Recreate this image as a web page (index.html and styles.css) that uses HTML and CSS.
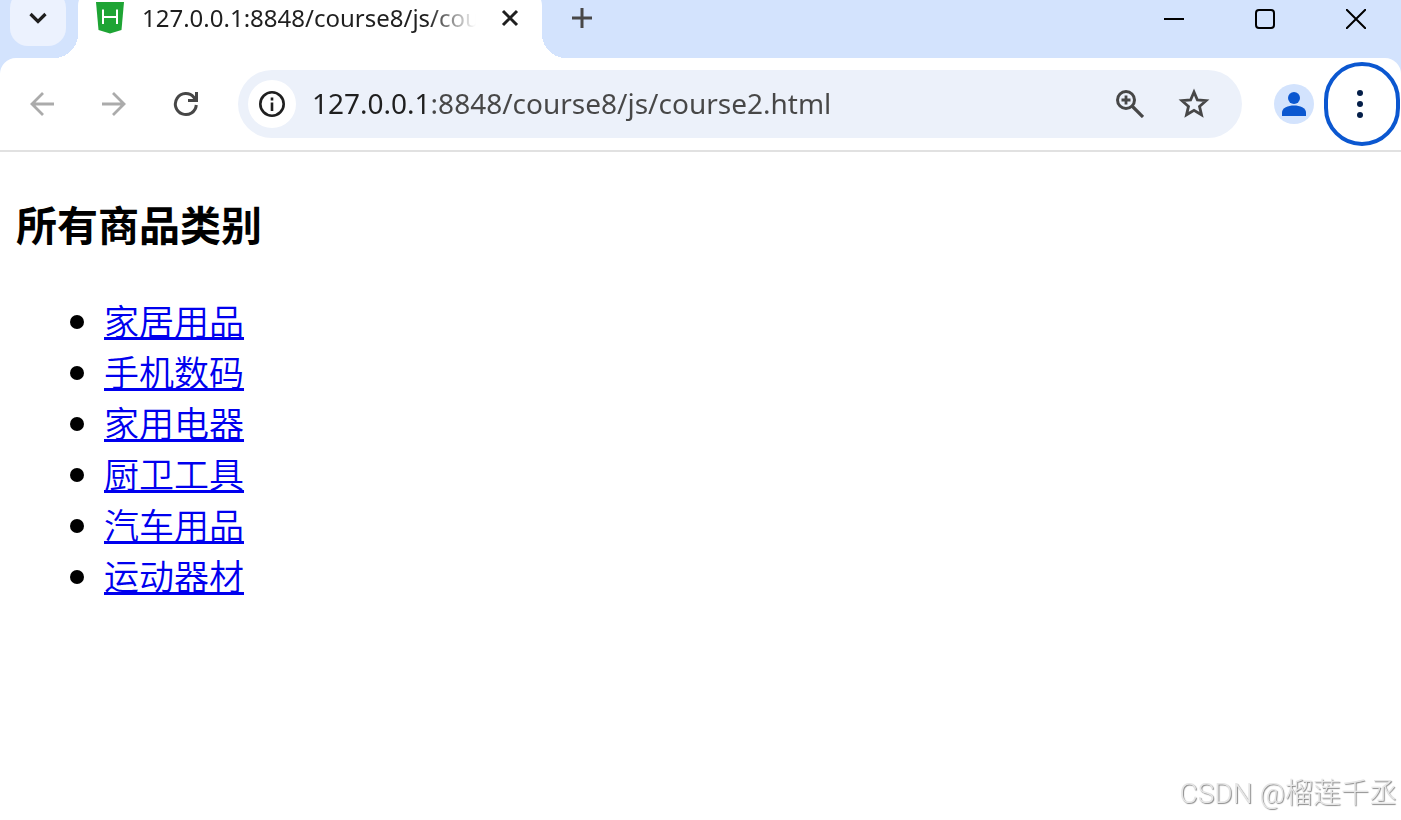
FILE: index.html
```html
<!DOCTYPE html>
<html lang="zh-CN">

<head>
	<meta charset="utf-8">
	<title>course2</title>
	<link rel="stylesheet" href="styles.css">
</head>

<body>
	<header class="browser">
		<div class="tabstrip">
			<button type="button" class="tabsearch" aria-label="搜索标签页">
				<svg width="20" height="12" viewBox="0 0 20 12"><path d="M2.500 2l7.500 7.500L17.500 2" fill="none" stroke="#1f1f1f" stroke-width="3.200" /></svg>
			</button>
			<div class="tab">
				<svg class="favicon" width="28" height="32" viewBox="0 0 28 32">
					<path d="M0 0h28l-2.500 28L14 31.500 2.500 28z" fill="#1ea434" />
					<path d="M7 7.500v14.500M21 7.500v14.500M7 15h14" fill="none" stroke="#fff" stroke-width="2" />
				</svg>
				<span class="tabtitle">127.0.0.1:8848/course8/js/course2.html</span>
				<button type="button" class="tabclose" aria-label="关闭">
					<svg width="18" height="18" viewBox="0 0 18 18"><path d="M2 2l14 14M16 2L2 16" stroke="#1f1f1f" stroke-width="3" /></svg>
				</button>
			</div>
			<button type="button" class="newtab" aria-label="新标签页">
				<svg width="20" height="20" viewBox="0 0 20 20"><path d="M10 0v20M0 10h20" stroke="#474747" stroke-width="3" /></svg>
			</button>
			<div class="windowbuttons">
				<button type="button" aria-label="最小化">
					<svg width="20" height="20" viewBox="0 0 20 20"><path d="M0 10h20" stroke="#000" stroke-width="2" /></svg>
				</button>
				<button type="button" aria-label="最大化">
					<svg width="20" height="20" viewBox="0 0 20 20"><rect x="1" y="1" width="18" height="18" rx="3" fill="none" stroke="#000" stroke-width="2" /></svg>
				</button>
				<button type="button" aria-label="关闭窗口">
					<svg width="20" height="20" viewBox="0 0 20 20"><path d="M0 0l20 20M20 0L0 20" stroke="#000" stroke-width="2" /></svg>
				</button>
			</div>
		</div>

		<div class="toolbar">
			<button type="button" class="nav" aria-label="后退">
				<svg width="24" height="24" viewBox="0 0 24 24"><path d="M24 12H2M13 1L2 12l11 11" fill="none" stroke="#ababab" stroke-width="2.800" /></svg>
			</button>
			<button type="button" class="nav" aria-label="前进">
				<svg width="24" height="24" viewBox="0 0 24 24"><path d="M0 12h22M11 1l11 11-11 11" fill="none" stroke="#ababab" stroke-width="2.800" /></svg>
			</button>
			<button type="button" class="nav" aria-label="重新加载">
				<svg width="26" height="26" viewBox="0 0 26 26"><path d="M23.300 14A10.500 10.500 0 1 1 20.800 6.200L23 9M23.500 1v8.500H15" fill="none" stroke="#474747" stroke-width="3" /></svg>
			</button>
			<div class="omnibox">
				<button type="button" class="siteinfo" aria-label="查看网站信息">
					<svg width="26" height="26" viewBox="0 0 26 26">
						<circle cx="13" cy="13" r="11.700" fill="none" stroke="#1f1f1f" stroke-width="2.600" />
						<path d="M13 11.500V20M13 6.500v3" stroke="#1f1f1f" stroke-width="2.600" />
					</svg>
				</button>
				<input type="text" class="url" aria-label="地址栏" value="127.0.0.1:8848/course8/js/course2.html">
				<button type="button" class="omniicon" aria-label="缩放">
					<svg width="28" height="28" viewBox="0 0 28 28">
						<circle cx="10" cy="10" r="8.500" fill="none" stroke="#474747" stroke-width="3" />
						<path d="M16 16l11 11" stroke="#474747" stroke-width="3.200" />
						<path d="M10 5.500v9M5.500 10h9" stroke="#474747" stroke-width="2.800" />
					</svg>
				</button>
				<button type="button" class="omniicon" aria-label="为此标签页添加书签">
					<svg width="32" height="32" viewBox="0 0 32 32"><path d="M16 4l3.400 8 8.600.700-6.500 5.700 2 8.400L16 22.300l-7.500 4.500 2-8.400L4 12.700l8.600-.700z" fill="none" stroke="#474747" stroke-width="2.800" /></svg>
				</button>
			</div>
			<button type="button" class="avatar" aria-label="个人资料">
				<svg width="24" height="24" viewBox="0 0 24 24">
					<circle cx="12" cy="6" r="6" fill="#0b57d0" />
					<path d="M0 24v-3.500C0 16 6 13.500 12 13.500s12 2.500 12 7V24z" fill="#0b57d0" />
				</svg>
			</button>
			<button type="button" class="menu" aria-label="菜单">
				<svg width="6" height="28" viewBox="0 0 6 28">
					<g fill="#041e49"><circle cx="3" cy="3" r="3" /><circle cx="3" cy="14" r="3" /><circle cx="3" cy="25" r="3" /></g>
				</svg>
			</button>
		</div>
	</header>

	<main class="content">
		<h3>所有商品类别</h3>
		<ul>
			<li><a href="#">家居用品</a></li>
			<li><a href="#">手机数码</a></li>
			<li><a href="#">家用电器</a></li>
			<li><a href="#">厨卫工具</a></li>
			<li><a href="#">汽车用品</a></li>
			<li><a href="#">运动器材</a></li>
		</ul>
	</main>

	<div class="watermark">CSDN @榴莲千丞</div>
</body>

</html>
```

FILE: styles.css
```css
* {
	box-sizing: border-box;
}

body {
	margin: 0;
	min-height: 100vh;
	background-color: #ffffff;
	font-family: "Noto Sans", "Noto Sans CJK SC", sans-serif;
}

button {
	display: flex;
	flex: none;
	align-items: center;
	justify-content: center;
	margin: 0;
	padding: 0;
	border: 0;
	background: none;
}

svg {
	display: block;
	flex: none;
}

.browser {
	background-color: #d3e3fd;
}

.tabstrip {
	display: flex;
	height: 58px;
	overflow: hidden;
}

/* the top of the strip runs off the window */
.tabsearch {
	width: 56px;
	height: 56px;
	margin: -10px 12px 0 10px;
	border-radius: 18px;
	background-color: #ecf2fe;
}

.tab {
	position: relative;
	display: flex;
	align-items: center;
	width: 464px;
	height: 72px;
	margin-top: -14px;
	padding: 0 18px 8px;
	border-radius: 20px 20px 0 0;
	background-color: #ffffff;
}

.tab::before,
.tab::after {
	content: "";
	position: absolute;
	bottom: 0;
	width: 24px;
	height: 24px;
}

.tab::before {
	right: 100%;
	background: radial-gradient(circle at 0 0, transparent 24px, #ffffff 24px);
}

.tab::after {
	left: 100%;
	background: radial-gradient(circle at 100% 0, transparent 24px, #ffffff 24px);
}

.tabtitle {
	flex: 1;
	min-width: 0;
	margin: 0 20px 0 18px;
	overflow: hidden;
	font-size: 24px;
	line-height: 32px;
	white-space: nowrap;
	color: #1f1f1f;
	-webkit-mask-image: linear-gradient(to left, transparent, #000000 48px);
	mask-image: linear-gradient(to left, transparent, #000000 48px);
}

.tabclose {
	width: 28px;
	height: 28px;
}

.newtab {
	width: 56px;
	height: 36px;
	margin-left: 12px;
}

.windowbuttons {
	display: flex;
	margin-left: auto;
}

.windowbuttons button {
	width: 91px;
	height: 38px;
}

.toolbar {
	display: flex;
	align-items: center;
	height: 94px;
	padding-left: 6px;
	border-bottom: 2px solid #e1e1e1;
	border-radius: 16px 16px 0 0;
	background-color: #ffffff;
}

.nav {
	width: 72px;
	height: 68px;
}

.omnibox {
	display: flex;
	flex: 1;
	align-items: center;
	min-width: 0;
	height: 68px;
	margin-left: 16px;
	padding: 0 16px 0 10px;
	border-radius: 34px;
	background-color: #ecf1fa;
}

.siteinfo {
	width: 48px;
	height: 48px;
	border-radius: 50%;
	background-color: #ffffff;
}

/* host is darker than the path */
.url {
	flex: 1;
	min-width: 0;
	height: 48px;
	margin: 0 0 0 16px;
	padding: 0 0 2px;
	border: 0;
	outline: 0;
	font: 28px "Noto Sans", sans-serif;
	color: transparent;
	background: linear-gradient(to right, #1f1f1f 118px, #474747 118px);
	-webkit-background-clip: text;
	background-clip: text;
}

.omniicon {
	width: 64px;
	height: 48px;
}

.avatar {
	width: 40px;
	height: 40px;
	margin: 0 10px 0 32px;
	border-radius: 50%;
	background-color: #d3e3fd;
}

.menu {
	width: 76px;
	height: 84px;
	margin-right: 1px;
	padding-right: 4px;
	border: 4px solid #0b57d0;
	border-radius: 38px;
}

.content {
	padding: 0 16px;
	font-family: "Noto Sans CJK SC", sans-serif;
	font-size: 35px;
	line-height: 51px;
}

.content h3 {
	margin: 0;
	padding: 41px 0;
	font-size: 41px;
	line-height: 60px;
}

.content ul {
	margin: 0;
	padding-left: 88px;
}

.content a {
	font-weight: 350;
	color: #0000ee;
}

.watermark {
	position: fixed;
	right: 4px;
	bottom: 6px;
	font: 28px/40px Roboto, "Noto Sans CJK SC", sans-serif;
	font-weight: 300;
	color: #e6e6e6;
	text-shadow: 1px 1px 1px #888888;
}
```
